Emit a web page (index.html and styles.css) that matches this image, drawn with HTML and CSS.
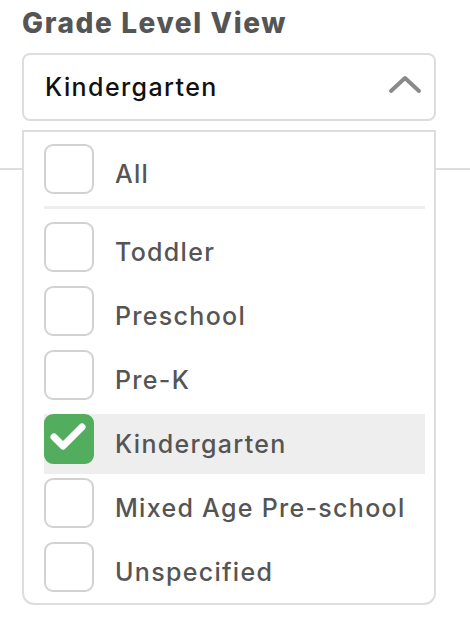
FILE: index.html
```html
<!DOCTYPE html>
<html>
<head>
<meta charset="utf-8">
<link rel="stylesheet" href="styles.css">
</head>
<body>
<div class="page">
  <h1 class="title">Grade Level View</h1>
  <div class="select">
    <span class="select-value">Kindergarten</span>
    <svg class="chevron" width="34" height="20" viewBox="0 0 34 20"><path d="M3 16 L17 3 L31 16" fill="none" stroke="#8a8a8a" stroke-width="4" stroke-linecap="round" stroke-linejoin="round"/></svg>
  </div>
</div>
<div class="divider"></div>
<div class="menu">
  <div class="row">
    <span class="box"></span><span class="label">All</span>
  </div>
  <div class="sep"></div>
  <div class="row"><span class="box"></span><span class="label">Toddler</span></div>
  <div class="row"><span class="box"></span><span class="label">Preschool</span></div>
  <div class="row"><span class="box"></span><span class="label">Pre-K</span></div>
  <div class="row row-active"><span class="box box-checked"><svg width="50" height="50" viewBox="0 0 50 50"><path d="M10 23 L19 32 L38 13" fill="none" stroke="#fff" stroke-width="7" stroke-linecap="round" stroke-linejoin="round"/></svg></span><span class="label">Kindergarten</span></div>
  <div class="row"><span class="box"></span><span class="label">Mixed Age Pre-school</span></div>
  <div class="row"><span class="box"></span><span class="label">Unspecified</span></div>
</div>
</body>
</html>
```
FILE: styles.css
```css
* { box-sizing: border-box; }
body {
  margin: 0;
  background: #fff;
  font-family: "Inter", "Liberation Sans", sans-serif;
  position: relative;
  width: 470px;
  height: 624px;
  overflow: hidden;
}
.page {
  padding: 0 34px 0 22px;
}
.title {
  margin: 0;
  height: 53px;
  padding-top: 6px;
  font-size: 28px;
  line-height: 34px;
  font-weight: 800;
  letter-spacing: 1.6px;
  color: #555;
}
.select {
  height: 68px;
  border: 2px solid #ddd;
  border-radius: 8px;
  display: flex;
  align-items: center;
  justify-content: space-between;
  padding: 0 12px 0 21px;
}
.select-value {
  font-size: 25px;
  color: #111;
  font-weight: 450;
  letter-spacing: 1.4px;
}
.chevron { display: block; margin-top: -4px; }
.divider {
  margin-top: 47px;
  height: 2px;
  background: #ddd;
}
.menu {
  position: absolute;
  left: 22px;
  top: 130px;
  width: 414px;
  height: 475px;
  background: #fff;
  border: 2px solid #ddd;
  border-radius: 0 0 12px 12px;
  padding: 12px 9px 0 20px;
}
.row {
  height: 60px;
  margin-bottom: 4px;
  display: flex;
  align-items: center;
  position: relative;
}
.row:first-child { margin-bottom: 2px; }
.box {
  position: absolute;
  left: 0;
  top: 0;
  width: 50px;
  height: 50px;
  border: 2px solid #d2d2d2;
  border-radius: 9px;
  background: #fff;
}
.box-checked {
  background: #52ad5e;
  border-color: #52ad5e;
}
.box-checked svg { position: absolute; left: -2px; top: -2px; }
.label {
  margin-left: 71px;
  font-size: 25px;
  color: #555;
  font-weight: 500;
  letter-spacing: 1.3px;
}
.row-active { background: #eee; }
.sep {
  height: 3px;
  background: #eee;
  margin-bottom: 13px;
}
```
